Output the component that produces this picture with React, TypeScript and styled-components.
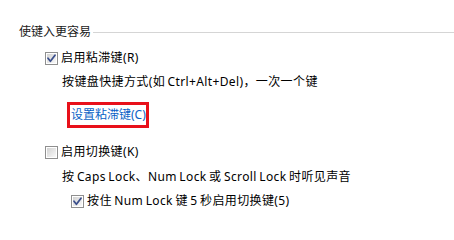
import * as React from 'react'
import styled, { createGlobalStyle } from 'styled-components'

const GlobalStyle = createGlobalStyle`
  html, body {
    margin: 0;
    padding: 0;
    background: #ffffff;
  }
  body {
    font-family: "Noto Sans", "Noto Sans CJK SC", "Microsoft YaHei", sans-serif;
    font-size: 12px;
    color: #000000;
  }
`

const Page = styled.div`
  width: 454px;
  height: 222px;
  padding: 24px 0 0 19px;
  box-sizing: border-box;
  overflow: hidden;
`

const GroupHeader = styled.div`
  display: flex;
  align-items: center;
  height: 16px;
  line-height: 16px;
  color: #1a1a1a;
`

const HeaderRule = styled.div`
  flex: 1;
  height: 1px;
  margin-left: 2px;
  background: #d5d5d5;
`

const CheckRow = styled.label<{ $indent: number; $top: number }>`
  display: flex;
  align-items: center;
  gap: 3px;
  height: 16px;
  line-height: 16px;
  margin-top: ${p => p.$top}px;
  padding-left: ${p => p.$indent}px;
  white-space: nowrap;
  letter-spacing: 0.38px;
  word-spacing: -1px;
`

const Description = styled.div<{ $top: number }>`
  height: 16px;
  line-height: 16px;
  margin-top: ${p => p.$top}px;
  padding-left: 43px;
  white-space: nowrap;
  letter-spacing: 0.38px;
  word-spacing: -1px;
`

const LinkFrame = styled.div`
  display: inline-flex;
  align-items: center;
  box-sizing: border-box;
  width: 82px;
  height: 26px;
  margin: 12px 0 0 48px;
  padding-left: 1px;
  border: 3px solid #e8101a;
`

const Link = styled.a`
  color: #0a62c6;
  text-decoration: none;
  line-height: 16px;
  white-space: nowrap;
  cursor: pointer;
`

const Box = styled.span`
  display: inline-block;
  width: 13px;
  height: 13px;
  flex: none;
`

function CheckBox({ checked }: { checked: boolean }) {
  return (
    <Box>
      <svg width="13" height="13" viewBox="0 0 13 13">
        <defs>
          <linearGradient id="cbfill" x1="0" y1="0" x2="1" y2="1">
            <stop offset="0" stopColor="#d2d2d2" />
            <stop offset="1" stopColor="#f9f9f9" />
          </linearGradient>
        </defs>
        <rect x="0.5" y="0.5" width="12" height="12" fill="#ffffff" stroke="#8f8f8f" />
        <rect x="2" y="2" width="9" height="9" fill="url(#cbfill)" />
        {checked && (
          <path
            d="M3 6.2 L5.4 9.2 L10 3.3"
            fill="none"
            stroke="#3b4f8c"
            strokeWidth="1.8"
            strokeLinecap="round"
            strokeLinejoin="round"
          />
        )}
      </svg>
    </Box>
  )
}

export default function App() {
  return (
    <>
      <GlobalStyle />
      <Page>
        <GroupHeader>
          使键入更容易
          <HeaderRule />
        </GroupHeader>

        <CheckRow $indent={26} $top={10}>
          <CheckBox checked />
          启用粘滞键(R)
        </CheckRow>
        <Description $top={8}>按键盘快捷方式(如 Ctrl+Alt+Del)，一次一个键</Description>
        <LinkFrame>
          <Link>设置粘滞键(C)</Link>
        </LinkFrame>

        <CheckRow $indent={26} $top={16}>
          <CheckBox checked={false} />
          启用切换键(K)
        </CheckRow>
        <Description $top={9}>按 Caps Lock、Num Lock 或 Scroll Lock 时听见声音</Description>
        <CheckRow $indent={52} $top={8}>
          <CheckBox checked />
          按住 Num Lock 键 5 秒启用切换键(5)
        </CheckRow>
      </Page>
    </>
  )
}
